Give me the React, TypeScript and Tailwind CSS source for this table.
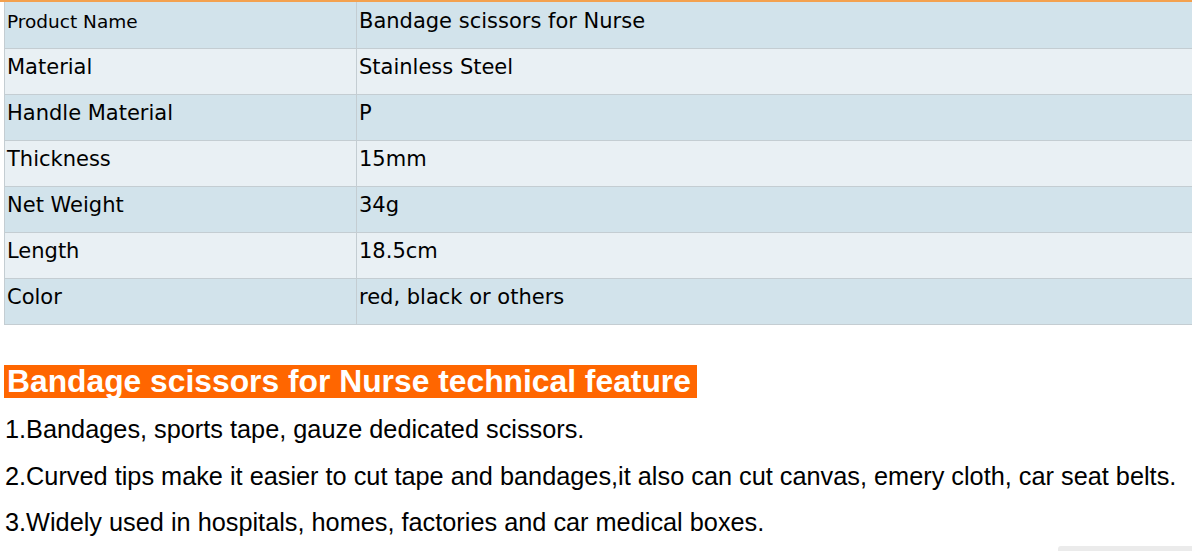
import React from "react";

const rows: [string, string][] = [
  ["Product Name", "Bandage scissors for Nurse"],
  ["Material", "Stainless Steel"],
  ["Handle Material", "P"],
  ["Thickness", "15mm"],
  ["Net Weight", "34g"],
  ["Length", "18.5cm"],
  ["Color", "red, black or others"],
];

export default function App() {
  return (
    <div className="w-[1192px] h-[551px] bg-white overflow-hidden flex flex-col text-black">
      <div className="h-[2px] bg-[#f3a14f]" />
      <div className="ml-[4px] border-l border-[#c4cdd2] font-['DejaVu_Sans',Verdana,sans-serif]">
        {rows.map(([k, v], i) => (
          <div
            key={k}
            className={`grid grid-cols-[352px_1fr] border-b border-[#c4cdd2] ${
              i === 0 ? "h-[47px]" : "h-[46px]"
            } ${i % 2 === 0 ? "bg-[#d2e3eb]" : "bg-[#e9f0f4]"}`}
          >
            <div
              className={`border-r border-[#c4cdd2] pl-[2px] ${
                i === 0 ? "pt-[9px] text-[18.5px] leading-[22px]" : "pt-[6px] text-[21px] leading-[24px]"
              }`}
            >
              {k}
            </div>
            <div className={`pl-[2px] text-[21px] leading-[24px] ${i === 0 ? "pt-[7px]" : "pt-[6px]"}`}>{v}</div>
          </div>
        ))}
      </div>
      <div className="mt-[40px] font-['Liberation_Sans',Arial,sans-serif]">
        <span className="inline-block ml-[4px] h-[33px] pl-[3px] pr-[6px] bg-[#ff6600] text-white font-bold text-[31.8px] leading-[33px]">
          Bandage scissors for Nurse technical feature
        </span>
      </div>
      <div className="mt-[7px] pl-[5px] font-['Liberation_Sans',Arial,sans-serif] text-[25.3px] leading-[46.5px]">
        <p>1.Bandages, sports tape, gauze dedicated scissors.</p>
        <p>2.Curved tips make it easier to cut tape and bandages,it also can cut canvas, emery cloth, car seat belts.</p>
        <p>3.Widely used in hospitals, homes, factories and car medical boxes.</p>
      </div>
      <div className="flex justify-end mt-auto">
        <div className="w-[134px] h-[5px] bg-[#ebebeb] rounded-tl-[3px]" />
      </div>
    </div>
  );
}
